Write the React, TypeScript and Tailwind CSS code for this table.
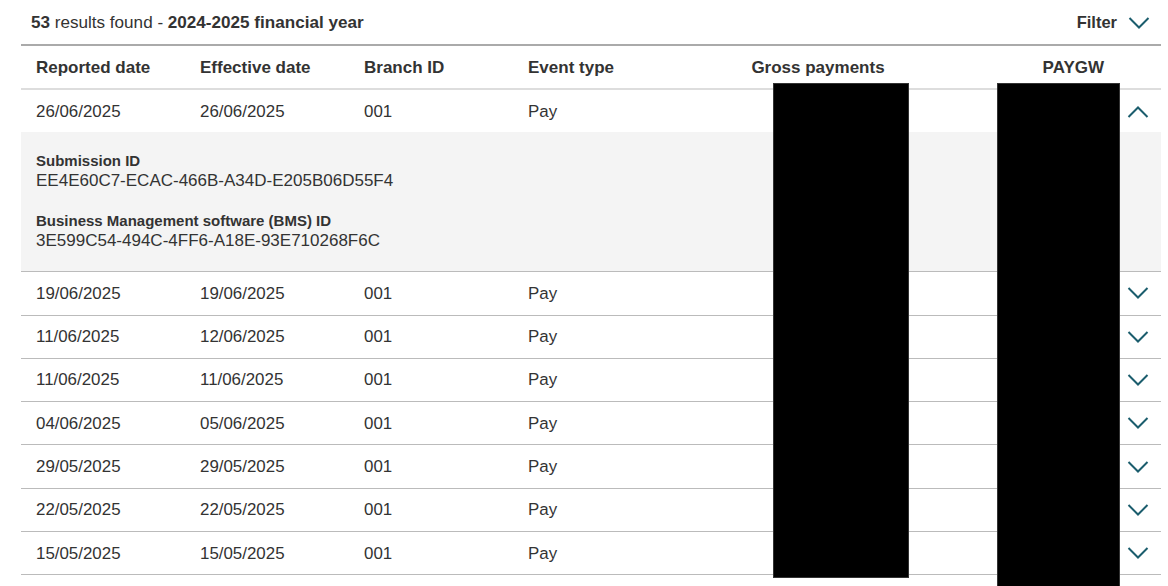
import React from "react";

const rows = [
  ["19/06/2025", "19/06/2025"],
  ["11/06/2025", "12/06/2025"],
  ["11/06/2025", "11/06/2025"],
  ["04/06/2025", "05/06/2025"],
  ["29/05/2025", "29/05/2025"],
  ["22/05/2025", "22/05/2025"],
  ["15/05/2025", "15/05/2025"],
];

function Chevron({ up = false }: { up?: boolean }) {
  return (
    <svg width="22" height="12" viewBox="0 0 22 12" fill="none" className="block">
      <polyline
        points={up ? "1.5,11 11,1.5 20.5,11" : "1.5,1 11,10.5 20.5,1"}
        stroke="#1b5d6d"
        strokeWidth="2"
      />
    </svg>
  );
}

const grid = "grid grid-cols-[164px_164px_164px_206px_198px_200px_44px] items-center";

function Row({ a, b, open = false }: { a: string; b: string; open?: boolean }) {
  return (
    <div className={`${grid} h-[42.3px] text-[16.9px] ${open ? "pt-[2px]" : ""}`}>
      <div className="pl-[15px]">{a}</div>
      <div className="pl-[15px]">{b}</div>
      <div className="pl-[15px]">001</div>
      <div className="pl-[15px]">Pay</div>
      <div />
      <div />
      <div className="flex items-center h-full">
        <div className="w-px h-[22px] bg-[#dcdcdc]" />
        <div className="ml-[9px]">
          <Chevron up={open} />
        </div>
      </div>
    </div>
  );
}

export default function App() {
  return (
    <div className="relative w-[1168px] h-[586px] overflow-hidden bg-white text-[#333] font-['Liberation_Sans',Arial,sans-serif]">
      <div className="mx-[21px] w-[1140px]">
        <div className="flex items-center justify-between h-[44px] pl-[10px] pr-[11px] pt-[1px]">
          <div className="text-[17.1px]">
            <span className="font-bold">53</span> results found -{" "}
            <span className="font-bold">2024-2025 financial year</span>
          </div>
          <div className="flex items-center gap-[11px]">
            <span className="font-bold text-[16.5px]">Filter</span>
            <Chevron />
          </div>
        </div>
        <div className="border-t-2 border-[#aaaaaa]" />
        <div className={`${grid} h-[44px] pt-[2px] border-b-2 border-[#dddddd] font-bold text-[17px]`}>
          <div className="pl-[15px]">Reported date</div>
          <div className="pl-[15px]">Effective date</div>
          <div className="pl-[15px]">Branch ID</div>
          <div className="pl-[15px]">Event type</div>
          <div className="text-center">Gross payments</div>
          <div className="text-right pr-[13px]">PAYGW</div>
          <div />
        </div>
        <Row a="26/06/2025" b="26/06/2025" open />
        <div className="bg-[#f4f4f4] px-[15px] pt-[20px] pb-[19px] border-b border-[#bbbbbb]">
          <div className="font-bold text-[15px] leading-[18px]">Submission ID</div>
          <div className="text-[17px] leading-[22px]">EE4E60C7-ECAC-466B-A34D-E205B06D55F4</div>
          <div className="font-bold text-[15px] leading-[18px] mt-[20px]">
            Business Management software (BMS) ID
          </div>
          <div className="text-[17px] leading-[22px]">3E599C54-494C-4FF6-A18E-93E710268F6C</div>
        </div>
        {rows.map(([a, b], i) => (
          <div key={i} className="border-b border-[#bbbbbb]">
            <Row a={a} b={b} />
          </div>
        ))}
      </div>
      <div className="absolute left-[773px] top-[83px] w-[136px] h-[495px] bg-black border border-[#333]" />
      <div className="absolute left-[997px] top-[83px] w-[123px] h-[510px] bg-black border border-[#333]" />
    </div>
  );
}
